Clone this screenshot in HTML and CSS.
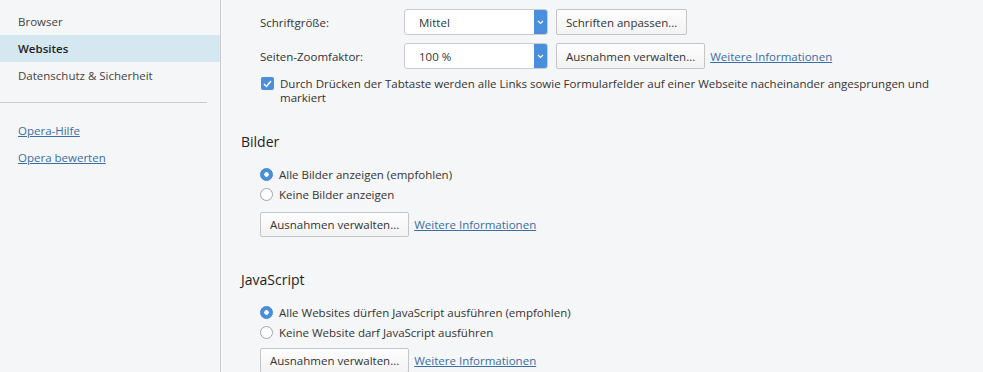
FILE: index.html
```html
<!DOCTYPE html>
<html lang="de">
<head>
    <meta charset="UTF-8">
    <title>Einstellungen - Websites</title>
    <link rel="stylesheet" href="styles.css">
</head>
<body>
    <div class="sidebar">
        <div class="nav-item">Browser</div>
        <div class="nav-item active">Websites</div>
        <div class="nav-item">Datenschutz &amp; Sicherheit</div>
        <div class="nav-sep"></div>
        <a class="nav-item nav-link" href="#">Opera-Hilfe</a>
        <a class="nav-item nav-link" href="#">Opera bewerten</a>
    </div>

    <div class="main">
        <div class="indent">
            <div class="row">
                <span class="row-label">Schriftgröße:</span>
                <div class="select">
                    <span>Mittel</span>
                    <span class="select-arrow">
                        <svg width="7" height="5" viewBox="0 0 7 5"><path d="M1 1l2.5 2.5L6 1" fill="none" stroke="#fff" stroke-width="1.2"/></svg>
                    </span>
                </div>
                <button class="btn">Schriften anpassen...</button>
            </div>
            <div class="row">
                <span class="row-label">Seiten-Zoomfaktor:</span>
                <div class="select">
                    <span>100 %</span>
                    <span class="select-arrow">
                        <svg width="7" height="5" viewBox="0 0 7 5"><path d="M1 1l2.5 2.5L6 1" fill="none" stroke="#fff" stroke-width="1.2"/></svg>
                    </span>
                </div>
                <button class="btn">Ausnahmen verwalten...</button>
                <a class="link" href="#">Weitere Informationen</a>
            </div>
            <label class="check-row">
                <span class="checkbox">
                    <svg width="9" height="8" viewBox="0 0 9 8"><path d="M1 4l2.5 2.5L8 1" fill="none" stroke="#fff" stroke-width="1.5"/></svg>
                </span>
                <span class="check-text">Durch Drücken der Tabtaste werden alle Links sowie Formularfelder auf einer Webseite nacheinander angesprungen und markiert</span>
            </label>
        </div>

        <div class="section">
            <h3>Bilder</h3>
            <div class="indent">
                <div class="radio-row"><span class="radio checked"></span>Alle Bilder anzeigen (empfohlen)</div>
                <div class="radio-row"><span class="radio"></span>Keine Bilder anzeigen</div>
                <div class="actions">
                    <button class="btn">Ausnahmen verwalten...</button>
                    <a class="link" href="#">Weitere Informationen</a>
                </div>
            </div>
        </div>

        <div class="section">
            <h3>JavaScript</h3>
            <div class="indent">
                <div class="radio-row"><span class="radio checked"></span>Alle Websites dürfen JavaScript ausführen (empfohlen)</div>
                <div class="radio-row"><span class="radio"></span>Keine Website darf JavaScript ausführen</div>
                <div class="actions actions-tight">
                    <button class="btn">Ausnahmen verwalten...</button>
                    <a class="link" href="#">Weitere Informationen</a>
                </div>
            </div>
        </div>
    </div>
</body>
</html>
```

FILE: styles.css
```css
body {
    margin: 0;
    display: flex;
    height: 372px;
    overflow: hidden;
    background-color: #f5f6f8;
    font-family: "Open Sans", "Noto Sans", sans-serif;
    font-size: 11.5px;
    color: #333;
}
.sidebar {
    width: 220px;
    flex-shrink: 0;
    padding-top: 8px;
    border-right: 1px solid #cdcfd2;
}
.nav-item {
    display: block;
    height: 27px;
    line-height: 27px;
    padding-left: 18px;
    color: #444;
}
.nav-item.active {
    background-color: #d5e8f1;
    color: #222;
    font-weight: 600;
}
.nav-sep {
    width: 207px;
    margin: 13px 0 14px;
    border-top: 1px solid #c9cbce;
}
.nav-link {
    color: #3a6ea6;
    text-decoration: underline;
}
.main {
    flex: 1;
    padding: 9px 0 0 20px;
}
.indent {
    padding-left: 19px;
}
.row {
    display: flex;
    align-items: center;
    height: 26px;
    margin-bottom: 8px;
}
.row-label {
    width: 144px;
}
.select {
    width: 144px;
    height: 26px;
    box-sizing: border-box;
    display: flex;
    align-items: center;
    justify-content: space-between;
    padding-left: 14px;
    background: white;
    border: 1px solid #c9cbce;
    border-radius: 3px;
    overflow: hidden;
    margin-right: 8px;
}
.select-arrow {
    width: 13px;
    height: 100%;
    display: flex;
    align-items: center;
    justify-content: center;
    background-color: #4a8fdb;
}
.btn {
    height: 26px;
    padding: 0 9px;
    font-family: inherit;
    font-size: 11.5px;
    color: #333;
    background: linear-gradient(#fdfdfd, #f3f3f3);
    border: 1px solid #c4c5c7;
    border-radius: 2px;
}
.link {
    margin-left: 5px;
    color: #3a6ea6;
    text-decoration: underline;
}
.check-row {
    display: flex;
    align-items: flex-start;
    margin-top: 1px;
    line-height: 14px;
    max-width: 684px;
}
.checkbox {
    width: 13px;
    height: 13px;
    flex-shrink: 0;
    margin: 0 6px 0 1px;
    display: flex;
    align-items: center;
    justify-content: center;
    background-color: #4a8fdb;
    border-radius: 2px;
}
.section {
    margin-top: 27px;
}
.section + .section {
    margin-top: 33px;
}
h3 {
    margin: 0 0 12px;
    font-size: 14px;
    font-weight: normal;
    line-height: 20px;
    color: #1e1e1e;
}
.radio-row {
    display: flex;
    align-items: center;
    height: 20px;
}
.radio {
    width: 11px;
    height: 11px;
    margin-right: 6px;
    border: 1px solid #9fa3a8;
    border-radius: 50%;
    background: white;
}
.radio.checked {
    border-color: #3d84d6;
    background: radial-gradient(circle, white 0 2px, #4a8fdb 2.5px);
}
.actions {
    display: flex;
    align-items: center;
    margin-top: 8px;
}
.actions .btn {
    height: 25px;
}
.actions-tight {
    margin-top: 6px;
}
```
